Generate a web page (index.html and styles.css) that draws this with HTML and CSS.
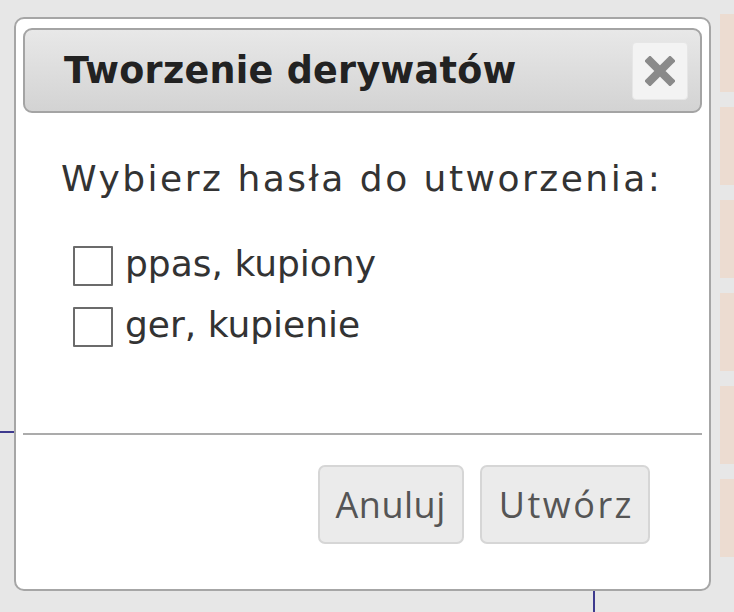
FILE: index.html
```html
<!DOCTYPE html>
<html lang="pl">
<head>
<meta charset="utf-8">
<title>Tworzenie derywatów</title>
<link rel="stylesheet" href="styles.css">
</head>
<body>
<div class="desktop">
  <div class="page">
    <div class="canvas">
      <span class="wire wire-h"></span>
      <span class="wire wire-v"></span>
    </div>
    <div class="side">
      <div class="side-block"></div>
      <div class="side-block"></div>
      <div class="side-block"></div>
      <div class="side-block"></div>
      <div class="side-block"></div>
      <div class="side-block"></div>
    </div>
  </div>

  <div class="dialog" role="dialog" aria-labelledby="dlg-title">
    <div class="titlebar">
      <span class="title" id="dlg-title">Tworzenie derywatów</span>
      <button class="close" type="button" aria-label="Zamknij">
        <svg width="30" height="30" viewBox="0 0 30 30" aria-hidden="true">
          <path d="M5 5 L25 25 M25 5 L5 25" stroke="#8a8a8a" stroke-width="8" stroke-linecap="square" fill="none"/>
        </svg>
      </button>
    </div>
    <div class="content">
      <p class="lead">Wybierz hasła do utworzenia:</p>
      <ul class="options">
        <li class="option"><span class="check"></span><span class="label">ppas, kupiony</span></li>
        <li class="option"><span class="check"></span><span class="label">ger, kupienie</span></li>
      </ul>
    </div>
    <div class="buttonpane">
      <button class="btn" type="button">Anuluj</button>
      <button class="btn btn-wide" type="button">Utwórz</button>
    </div>
  </div>
</div>
</body>
</html>
```

FILE: styles.css
```css
html, body {
  margin: 0;
  padding: 0;
}

body {
  background: #e7e7e7;
  font-family: "DejaVu Sans", Verdana, sans-serif;
}

.desktop {
  position: relative;
  width: 734px;
  height: 612px;
  overflow: hidden;
}

.page {
  display: flex;
  height: 100%;
}

.canvas {
  position: relative;
  flex: 1;
}

.wire {
  position: absolute;
  background: #3e3a8e;
}

.wire-h {
  left: 0;
  top: 431px;
  width: 14px;
  height: 2px;
}

.wire-v {
  left: 593px;
  top: 590px;
  width: 2px;
  height: 22px;
}

.side {
  width: 14px;
  display: flex;
  flex-direction: column;
  gap: 15px;
  padding-top: 14px;
}

.side-block {
  height: 78px;
  background: #ecdcd1;
}

.dialog {
  position: absolute;
  left: 14px;
  top: 17px;
  width: 697px;
  height: 574px;
  box-sizing: border-box;
  display: flex;
  flex-direction: column;
  background: #fff;
  border: 2px solid #a6a6a6;
  border-radius: 10px;
  padding: 9px 7px 7px;
}

.titlebar {
  height: 85px;
  box-sizing: border-box;
  display: flex;
  align-items: center;
  padding: 0 12px 0 39px;
  border: 2px solid #a4a4a4;
  border-radius: 9px;
  background: linear-gradient(#e8e8e8, #d3d3d3);
}

.title {
  font-weight: bold;
  font-size: 36.5px;
  letter-spacing: 0.3px;
  color: #222;
}

.close {
  margin-left: auto;
  width: 56px;
  height: 58px;
  padding: 0;
  display: flex;
  align-items: center;
  justify-content: center;
  background: #f3f3f3;
  border: 1px solid #e6e6e6;
  border-radius: 4px;
}

.content {
  flex: 1;
  padding: 45px 0 0 38px;
}

.lead {
  margin: 0;
  font-size: 36px;
  line-height: 42.5px;
  letter-spacing: 2.5px;
  color: #333;
}

.options {
  list-style: none;
  margin: 35px 0 0;
  padding: 0;
}

.option {
  height: 61px;
  display: flex;
  align-items: center;
  gap: 12px;
  padding-left: 12px;
}

.check {
  width: 40px;
  height: 40px;
  box-sizing: border-box;
  border: 2px solid #6b6b6b;
  border-radius: 1px;
  background: #fff;
}

.label {
  font-size: 36px;
  line-height: 42px;
  color: #333;
  position: relative;
  top: -2px;
}

.buttonpane {
  height: 149px;
  box-sizing: border-box;
  border-top: 2px solid #ababab;
  padding: 30px 52px 0 0;
  display: flex;
  justify-content: flex-end;
  align-items: flex-start;
  gap: 16px;
}

.btn {
  height: 79px;
  padding: 0 16px;
  font-family: "Open Sans", "DejaVu Sans", sans-serif;
  font-size: 36px;
  letter-spacing: 0.5px;
  color: #555;
  background: #ebebeb;
  border: 2px solid #d6d6d6;
  border-radius: 7px;
}

.btn-wide {
  padding: 0 14px 0 17px;
  letter-spacing: 2.5px;
}
```
